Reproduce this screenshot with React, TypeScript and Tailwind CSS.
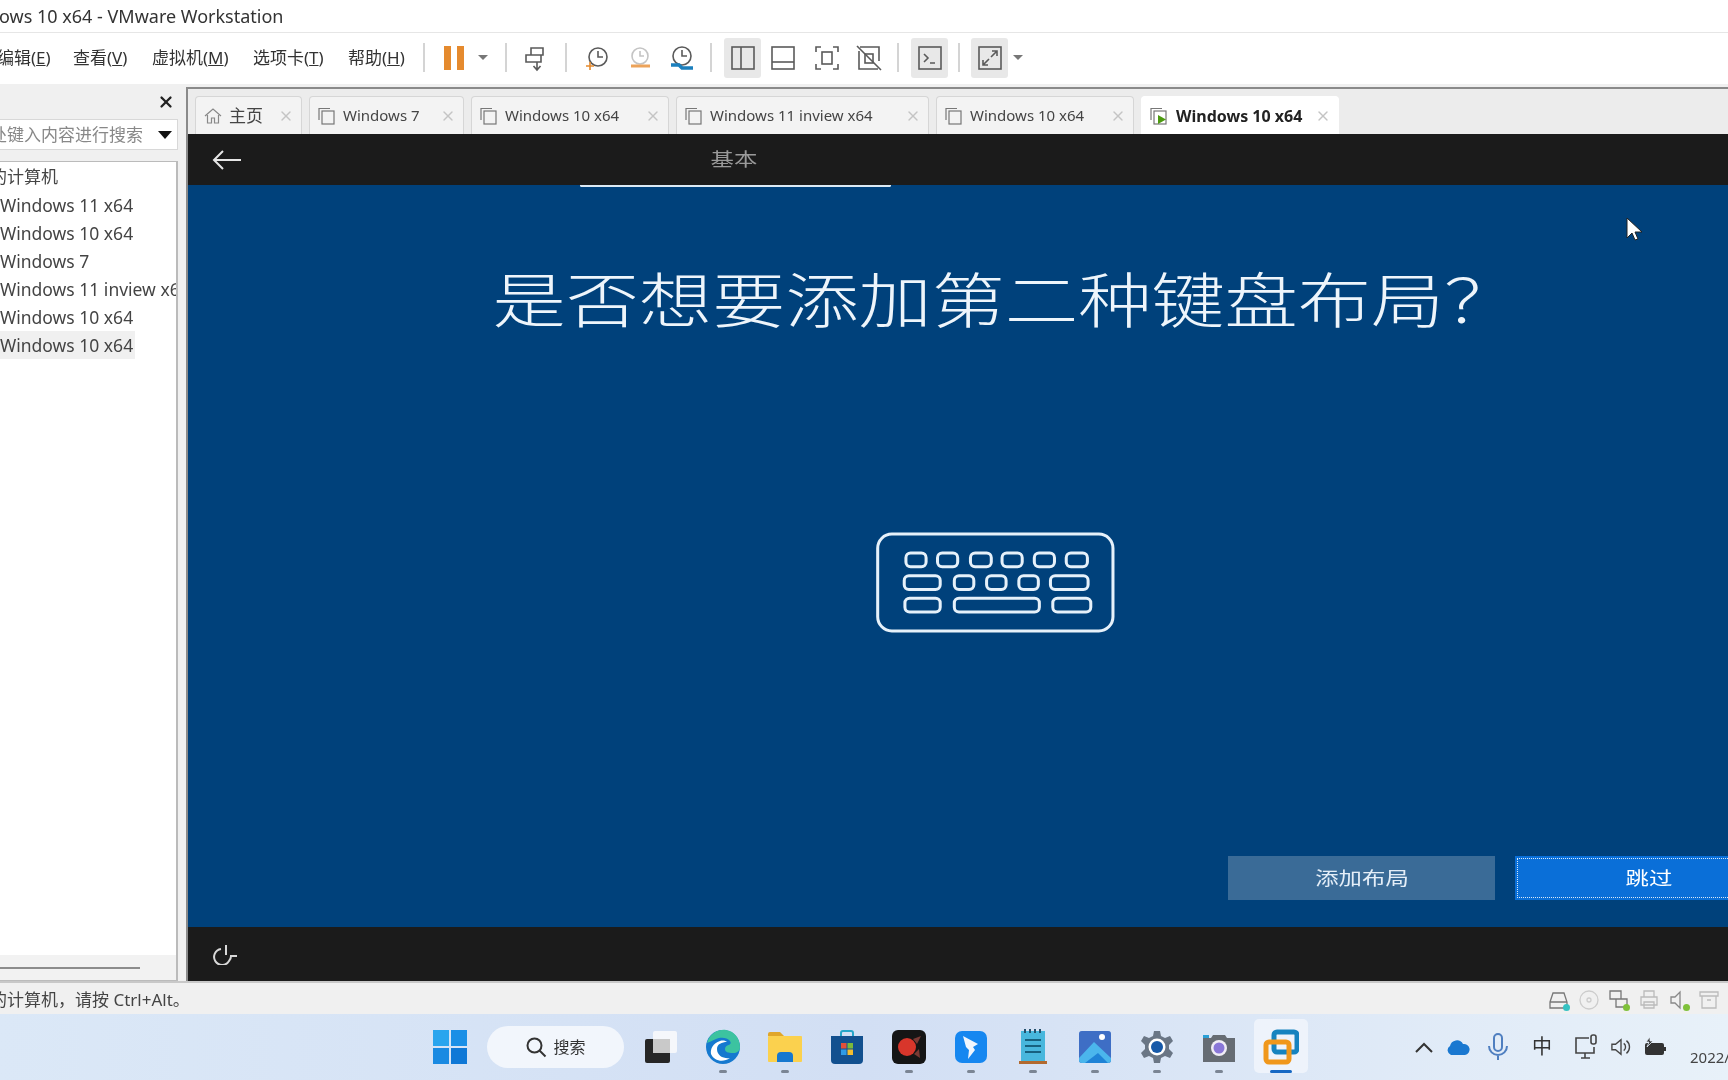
import { X } from "lucide-react";

const ui = "font-['Noto_Sans','Noto_Sans_CJK_SC',sans-serif]";

function Sep({ ml }: { ml: string }) {
  return <div className={`h-[29px] w-[2px] bg-[#d4d4d4] ${ml}`} />;
}

function Caret() {
  return <div className="h-0 w-0 border-x-[5px] border-t-[5px] border-x-transparent border-t-[#777]" />;
}

function Menu({ label, k, cls }: { label: string; k: string; cls: string }) {
  return (
    <span className={`shrink-0 whitespace-nowrap text-[17px] leading-none text-[#333] ${cls}`}>
      {label}(<span className="underline">{k}</span>)
    </span>
  );
}

function ToolIcon({ children, active, cls }: { children: React.ReactNode; active?: boolean; cls: string }) {
  return (
    <div className={`flex h-[40px] w-[37px] shrink-0 items-center justify-center rounded-[3px] ${active ? "bg-[#e8e8e8]" : ""} ${cls}`}>
      <svg width="28" height="28" viewBox="0 0 28 28" fill="none" stroke="#5a5a5a" strokeWidth="1.6">
        {children}
      </svg>
    </div>
  );
}

function TabIcon({ play }: { play?: boolean }) {
  return (
    <svg width="20" height="20" viewBox="0 0 20 20" fill="none" stroke="#777" strokeWidth="1.2" className="shrink-0">
      <path d="M2 14V2.5h11" />
      <rect x="5" y="5" width="12" height="13" fill={play ? "#fff" : "none"} />
      {play && <path d="M9 9l8 4.5-8 4.5z" fill="#4c9a10" stroke="none" />}
    </svg>
  );
}

function Tab({ label, w, gap, active, home }: { label: string; w: string; gap: string; active?: boolean; home?: boolean }) {
  return (
    <div
      className={`flex h-[38px] shrink-0 items-center rounded-t-[4px] border border-b-0 px-[7px] ${w} ${
        active ? "border-white bg-white text-[16px] font-bold text-[#222]" : "border-[#d6d6d6] bg-[#f3f3f3] text-[15px] text-[#444]"
      }`}
    >
      {home ? (
        <svg width="20" height="20" viewBox="0 0 20 20" fill="none" stroke="#888" strokeWidth="1.2" className="shrink-0">
          <path d="M2 10l8-7 8 7M4.5 9v8h4v-5h3v5h4V9" />
        </svg>
      ) : (
        <TabIcon play={active} />
      )}
      <span className={`whitespace-nowrap ${gap}`}>{label}</span>
      <X className="ml-auto shrink-0 text-[#c4c4c4]" size={16} strokeWidth={2} />
    </div>
  );
}

function Keyboard() {
  const keys = [
    [138, 97, 60], [232, 97, 60], [330, 97, 62], [424, 97, 60], [520, 97, 60], [615, 97, 63],
    [133, 165, 107], [282, 165, 58], [378, 165, 58], [474, 165, 58], [568, 165, 112],
    [135, 232, 105], [282, 232, 253], [575, 232, 113],
  ];
  return (
    <svg width="242" height="103" viewBox="46 32 720 306" fill="none" stroke="#e6f1fa" strokeWidth="9">
      <rect x="54" y="41" width="700" height="288" rx="42" />
      {keys.map(([x, y, w]) => (
        <rect key={`${x}-${y}`} x={x} y={y} width={w} height="41" rx="14" />
      ))}
    </svg>
  );
}

function StatusIcon({ children, dot }: { children: React.ReactNode; dot?: string }) {
  return (
    <div className="relative flex w-[30px] justify-center">
      <svg width="22" height="22" viewBox="0 0 22 22" fill="none" stroke="#9a9a9a" strokeWidth="1.3">
        {children}
      </svg>
      {dot && <span className={`absolute bottom-[0px] right-[4px] h-[7px] w-[7px] rounded-full ${dot}`} />}
    </div>
  );
}

function Cell({ children, dot, active }: { children: React.ReactNode; dot?: boolean; active?: boolean }) {
  return (
    <div className="relative flex h-[66px] w-[62px] shrink-0 items-center justify-center">
      {active && <div className="absolute left-[4px] top-[5px] h-[54px] w-[54px] rounded-[5px] bg-[#eef3fb]" />}
      <div className="relative">{children}</div>
      {dot && <span className="absolute left-[27px] top-[56px] h-[3px] w-[8px] rounded-full bg-[#7b8594]" />}
      {active && <span className="absolute left-[20px] top-[56px] h-[3px] w-[22px] rounded-full bg-[#1668c4]" />}
    </div>
  );
}

function Taskbar() {
  return (
    <div className={`flex h-[66px] shrink-0 items-center bg-gradient-to-r from-[#dbe8f7] via-[#d2dff4] to-[#e8f1f9] pl-[419px] ${ui}`}>
      <Cell>
        <svg width="34" height="34" viewBox="0 0 34 34">
          <rect width="16" height="16" fill="#2aa5ee" />
          <rect x="18" width="16" height="16" fill="#1a8fe6" />
          <rect y="18" width="16" height="16" fill="#1a8ae2" />
          <rect x="18" y="18" width="16" height="16" fill="#0f78d6" />
        </svg>
      </Cell>
      <div className="mx-[6px] flex h-[42px] w-[137px] shrink-0 items-center justify-center gap-[6px] rounded-full bg-[#f2f6fc] text-[16px] text-[#333]">
        <svg width="22" height="22" viewBox="0 0 22 22" fill="none" stroke="#333" strokeWidth="2">
          <circle cx="9.5" cy="9.5" r="7" />
          <path d="M14.5 14.5l6 6" />
        </svg>
        搜索
      </div>
      <Cell>
        <svg width="34" height="34" viewBox="0 0 34 34">
          <rect x="9" y="1" width="24" height="22" rx="2" fill="#f5f7fb" />
          <rect x="1" y="9" width="25" height="24" rx="2" fill="#262626" />
          <rect x="9" y="9" width="17" height="14" fill="#c9c9c9" />
        </svg>
      </Cell>
      <Cell dot>
        <svg width="36" height="36" viewBox="0 0 36 36">
          <circle cx="18" cy="18" r="17" fill="#1579cf" />
          <path d="M2 14C5 3 15 0 21 1c8 1 14 8 14 17 0 4-3 6-7 6-5 0-8-1-8-4 0-5 8-3 5-8-3-4-10-4-14-2C7 12 4 13 2 14z" fill="#3cc3a0" />
          <path d="M12 20c0 7 7 10 13 9-7 5-16 3-19-4-1-5 2-11 9-13 3-1 6 0 7 1-5 0-10 2-10 7z" fill="#fff" />
        </svg>
      </Cell>
      <Cell dot>
        <svg width="36" height="34" viewBox="0 0 36 34">
          <path d="M1 4a2 2 0 012-2h10l4 4h-16z" fill="#e0a62a" />
          <rect x="1" y="6" width="34" height="26" rx="1" fill="#fbd14e" />
          <path d="M10 32v-6a4 4 0 014-4h8a4 4 0 014 4v6z" fill="#1678cf" />
        </svg>
      </Cell>
      <Cell>
        <svg width="34" height="36" viewBox="0 0 34 36">
          <path d="M11 7V4a2 2 0 012-2h8a2 2 0 012 2v3" fill="none" stroke="#25a5c9" strokeWidth="2" />
          <path d="M1 7h32v24a4 4 0 01-4 4H5a4 4 0 01-4-4z" fill="#12508f" />
          <rect x="11" y="14" width="5.5" height="5.5" fill="#e2503a" />
          <rect x="17.5" y="14" width="5.5" height="5.5" fill="#7cba3b" />
          <rect x="11" y="20.5" width="5.5" height="5.5" fill="#2e9be6" />
          <rect x="17.5" y="20.5" width="5.5" height="5.5" fill="#f4bd2f" />
        </svg>
      </Cell>
      <Cell dot>
        <svg width="34" height="34" viewBox="0 0 34 34">
          <rect width="34" height="34" rx="6" fill="#151515" />
          <circle cx="15" cy="17" r="9" fill="#d8362b" />
          <path d="M21 9l8-3-4 8zM22 24l6 4-1-9z" fill="#7a3a34" />
        </svg>
      </Cell>
      <Cell dot>
        <svg width="32" height="32" viewBox="0 0 32 32">
          <rect width="32" height="32" rx="7" fill="#1687f0" />
          <path d="M8 5l15 8-5 3 2 3-7 9 1-9-3-3z" fill="#f1f6fd" />
        </svg>
      </Cell>
      <Cell dot>
        <svg width="28" height="36" viewBox="0 0 28 36">
          <rect x="2" y="2" width="24" height="30" fill="#48b7dd" />
          <path d="M6 0v4M11 0v4M16 0v4M21 0v4" stroke="#25516d" strokeWidth="2" />
          <path d="M6 11h16M6 17h16M6 23h16" stroke="#17617f" strokeWidth="2" />
          <rect y="32" width="28" height="3" fill="#b26a30" />
        </svg>
      </Cell>
      <Cell dot>
        <svg width="32" height="32" viewBox="0 0 32 32">
          <rect width="32" height="32" rx="3" fill="#2d73c8" />
          <rect width="32" height="32" rx="3" fill="#5e63c0" fillOpacity="0.35" />
          <circle cx="23" cy="6" r="3" fill="#fff" />
          <path d="M0 27L15 11l17 16v2a3 3 0 01-3 3H3a3 3 0 01-3-3z" fill="#4bb6ec" />
          <path d="M6 32l13-10 10 10z" fill="#1f83d6" />
        </svg>
      </Cell>
      <Cell dot>
        <svg width="34" height="34" viewBox="0 0 34 34">
          <path d="M14 1h6l1 5 4 2 5-2 3 5-4 4v4l4 4-3 5-5-2-4 2-1 5h-6l-1-5-4-2-5 2-3-5 4-4v-4L1 11l3-5 5 2 4-2z" fill="#6a7685" />
          <circle cx="17" cy="17" r="8.5" fill="#fff" />
          <circle cx="17" cy="17" r="6" fill="#1759a8" />
        </svg>
      </Cell>
      <Cell dot>
        <svg width="34" height="30" viewBox="0 0 34 30">
          <path d="M1 6h8l2-3h12l2 3h8v24H1z" fill="#666c73" />
          <rect x="1" y="3" width="6" height="3" fill="#2a9fd6" />
          <circle cx="17" cy="16" r="8" fill="#f0edf5" />
          <circle cx="17" cy="16" r="5.5" fill="#8a77d8" />
        </svg>
      </Cell>
      <Cell active>
        <svg width="36" height="36" viewBox="0 0 36 36" fill="none" strokeWidth="5">
          <rect x="11" y="3" width="23" height="20" rx="3" stroke="#1683bf" />
          <rect x="3" y="13" width="23" height="20" rx="3" stroke="#f0971b" />
        </svg>
      </Cell>
      <div className="ml-[95px] flex shrink-0 items-center text-[#333]">
        <div className="flex w-[34px] justify-center">
          <svg width="20" height="12" viewBox="0 0 20 12" fill="none" stroke="#333" strokeWidth="2">
            <path d="M2 11l8-8 8 8" />
          </svg>
        </div>
        <div className="flex w-[34px] justify-center">
          <svg width="24" height="16" viewBox="0 0 24 16">
            <path d="M5 16a5 5 0 01-1-9 7 7 0 0113-2 5.5 5.5 0 012 11z" fill="#1a78d0" />
          </svg>
        </div>
        <div className="flex w-[46px] justify-center">
          <svg width="20" height="28" viewBox="0 0 20 28" fill="none" stroke="#4f7fc0" strokeWidth="2">
            <rect x="6" y="1" width="8" height="17" rx="4" />
            <path d="M1 13a9 9 0 0018 0M10 22v5" />
          </svg>
        </div>
        <div className="w-[42px] text-center text-[20px] leading-none">中</div>
        <div className="flex w-[48px] justify-center">
          <svg width="24" height="26" viewBox="0 0 24 26" fill="none" stroke="#444" strokeWidth="1.6">
            <path d="M14 4H1v15h18v-6M6 24h9M10 19v5" />
            <rect x="16" y="1" width="5" height="9" rx="2" />
          </svg>
        </div>
        <div className="flex w-[20px] justify-center">
          <svg width="22" height="20" viewBox="0 0 22 20" fill="none" stroke="#444" strokeWidth="1.5">
            <path d="M1 7v6h4l6 5V2L5 7zM14 6a5 5 0 010 8M17 3a9 9 0 010 14" />
          </svg>
        </div>
        <div className="flex w-[48px] justify-center">
          <svg width="24" height="20" viewBox="0 0 24 20">
            <path d="M2 8a2 2 0 012-2h15a2 2 0 012 2v8a2 2 0 01-2 2H4a2 2 0 01-2-2z" fill="#333" />
            <rect x="21" y="10" width="2" height="4" fill="#333" />
            <path d="M7 0L3 5h3l-2 5 6-6H7z" fill="#333" stroke="#e6eff9" strokeWidth="0.8" />
          </svg>
        </div>
        <div className="ml-[11px] flex w-[60px] flex-col whitespace-nowrap text-[15px] leading-[20px] text-[#444]">
          <span className="ml-[37px]">1</span>
          <span>2022/</span>
        </div>
      </div>
    </div>
  );
}

export default function App() {
  return (
    <div className={`flex h-[1080px] w-[1728px] flex-col overflow-hidden bg-[#f0f0f0] blur-[0.5px] ${ui}`}>
      <div className="flex h-[33px] shrink-0 items-center whitespace-nowrap border-b border-[#e6e6e6] bg-white text-[18px] text-[#333]">
        <span className="-ml-[1px]">ows 10 x64 - VMware Workstation</span>
      </div>

      <div className="flex h-[51px] shrink-0 items-center bg-white pb-[2px]">
        <Menu label="编辑" k="E" cls="-ml-[3px] w-[53px]" />
        <Menu label="查看" k="V" cls="ml-[23px] w-[57px]" />
        <Menu label="虚拟机" k="M" cls="ml-[22px] w-[78px]" />
        <Menu label="选项卡" k="T" cls="ml-[23px] w-[72px]" />
        <Menu label="帮助" k="H" cls="ml-[23px] w-[57px]" />
        <Sep ml="ml-[18px]" />
        <div className="ml-[19px] flex h-[24px] w-[20px] justify-between">
          <div className="w-[7px] bg-[#e58a2e]" />
          <div className="w-[7px] bg-[#e58a2e]" />
        </div>
        <div className="ml-[14px]"><Caret /></div>
        <Sep ml="ml-[17px]" />
        <ToolIcon cls="ml-[11px]">
          <path d="M8 4h12v7H8zM3 11h15v7H3zM14 18v7M10.5 22l3.5 4 3.5-4" />
        </ToolIcon>
        <Sep ml="ml-[10px]" />
        <ToolIcon cls="ml-[11px]">
          <circle cx="15" cy="13" r="9" />
          <path d="M15 7v6h5" />
          <path d="M3 22h8M7 18v8" stroke="#e58a2e" />
        </ToolIcon>
        <ToolIcon cls="ml-[6px]">
          <g stroke="#c4c4c4">
            <circle cx="14" cy="12" r="8" />
            <path d="M14 7v5h4" />
          </g>
          <path d="M5 22h19" stroke="#eca35a" strokeWidth="3" />
        </ToolIcon>
        <ToolIcon cls="ml-[5px]">
          <circle cx="14" cy="12" r="9" />
          <path d="M14 6v6h5" />
          <path d="M3 21h8l3 3h11" stroke="#1b7fbd" strokeWidth="3.5" />
        </ToolIcon>
        <Sep ml="ml-[10px]" />
        <ToolIcon active cls="ml-[12px]">
          <rect x="3" y="3" width="22" height="22" />
          <path d="M12 3v22" />
        </ToolIcon>
        <ToolIcon cls="ml-[3px]">
          <rect x="3" y="3" width="22" height="22" />
          <path d="M3 18h22" />
        </ToolIcon>
        <ToolIcon cls="ml-[7px]">
          <path d="M8 3H3v5M20 3h5v5M8 25H3v-5M20 25h5v-5" />
          <rect x="9" y="8" width="10" height="12" />
        </ToolIcon>
        <ToolIcon cls="ml-[5px]">
          <path d="M5 3h19v14M23 25H4V7M2 2l24 24" />
          <rect x="10" y="10" width="8" height="9" />
        </ToolIcon>
        <Sep ml="ml-[10px]" />
        <ToolIcon active cls="ml-[12px]">
          <rect x="3" y="3" width="22" height="22" />
          <path d="M8 10l4 4-4 4M14 19h5" />
        </ToolIcon>
        <Sep ml="ml-[10px]" />
        <ToolIcon active cls="ml-[11px]">
          <rect x="3" y="3" width="22" height="22" />
          <path d="M15 13l6-6M16 7h5v5M13 15l-6 6M12 21H7v-5" />
        </ToolIcon>
        <div className="ml-[5px]"><Caret /></div>
      </div>

      <div className="flex min-h-0 flex-1">
        <aside className="flex w-[186px] shrink-0 flex-col pr-[8px]">
          <div className="flex h-[35px] shrink-0 items-center justify-end pr-[3px]">
            <X size={18} strokeWidth={3} className="text-[#222]" />
          </div>
          <div className="flex h-[31px] shrink-0 items-center justify-between whitespace-nowrap border border-l-0 border-[#d8d8d8] bg-white pr-[5px] text-[17px] text-[#888]">
            <span className="-ml-[10px]">处键入内容进行搜索</span>
            <div className="h-0 w-0 border-x-[7px] border-t-[8px] border-x-transparent border-t-[#111]" />
          </div>
          <div className="mt-[11px] flex min-h-0 flex-1 flex-col border-y border-r-2 border-y-[#bbb] border-r-[#bbb] bg-white text-[17.5px] text-[#444]">
            <div className="flex-1 overflow-hidden whitespace-nowrap pt-[1px] leading-[28px]">
              <div className="-ml-[10px] text-[17px]">的计算机</div>
              <div>Windows 11 x64</div>
              <div>Windows 10 x64</div>
              <div>Windows 7</div>
              <div>Windows 11 inview x64</div>
              <div>Windows 10 x64</div>
              <div className="w-[135px] bg-[#f0f0f0]">Windows 10 x64</div>
            </div>
            <div className="flex h-[25px] shrink-0 items-center bg-[#f2f2f2]">
              <div className="h-[2px] w-[140px] bg-[#8c8c8c]" />
            </div>
          </div>
        </aside>

        <main className="mt-[3px] flex min-w-0 flex-1 flex-col border-l-2 border-t-2 border-[#8a8a8a]">
          <div className="flex h-[45px] shrink-0 items-end gap-[7px] overflow-hidden bg-[#ececec] pl-[7px]">
            <Tab home label="主页" w="w-[107px]" gap="ml-[6px] font-normal text-[17px]" />
            <Tab label="Windows 7" w="w-[155px]" gap="ml-[6px]" />
            <Tab label="Windows 10 x64" w="w-[198px]" gap="ml-[6px]" />
            <Tab label="Windows 11 inview x64" w="w-[253px]" gap="ml-[6px]" />
            <Tab label="Windows 10 x64" w="w-[198px]" gap="ml-[6px]" />
            <Tab active label="Windows 10 x64" w="w-[198px]" gap="ml-[7px]" />
          </div>

          <div className="flex h-[51px] shrink-0 items-center bg-[#1b1b1b]">
            <svg width="30" height="22" viewBox="0 0 30 22" fill="none" stroke="#e6e6e6" strokeWidth="2" className="ml-[24px]">
              <path d="M29 11H2M11 2l-9 9 9 9" />
            </svg>
            <span className="ml-[474px] inline-block scale-x-[1.3] text-[18px] text-[#9a9a9a]">基本</span>
          </div>

          <div className="relative flex min-h-0 flex-1 flex-col overflow-hidden bg-[#00417b]">
            <div className="absolute left-[392px] top-[-1px] h-[3px] w-[311px] rounded-full bg-[#dbe9f5]" />
            <svg width="20" height="26" viewBox="0 0 20 26" className="absolute left-[1436px] top-[32px]">
              <path d="M3 1v20l5-5 3 7 3-1-3-7h7z" fill="#fff" stroke="#222" strokeWidth="1" />
            </svg>

            <div className="mt-[75px] flex justify-center pl-[94px]">
              <h1 className="scale-x-[1.22] whitespace-nowrap text-[60px] font-light leading-[80px] text-[#eef5fb]">
                是否想要添加第二种键盘布局？
              </h1>
            </div>

            <div className="mt-[191px] flex justify-center pl-[75px]">
              <Keyboard />
            </div>

            <div className="mt-auto mb-[27px] flex justify-end gap-[20px] -mr-[54px] text-[18px] text-[#e4eef8]">
              <button className="h-[44px] w-[267px] bg-[#3a6b97]">
                <span className="inline-block scale-x-[1.3]">添加布局</span>
              </button>
              <button className="flex h-[44px] w-[267px] items-center justify-center border-[3px] border-[#0a6fd8] bg-[#0a6fd8] text-white outline-dotted outline-1 -outline-offset-3 outline-[#dbe9f5]">
                <span className="inline-block scale-x-[1.3]">跳过</span>
              </button>
            </div>
          </div>

          <div className="flex h-[54px] shrink-0 items-center bg-[#1b1b1b] pl-[24px]">
            <svg width="28" height="22" viewBox="0 0 28 22" fill="none" stroke="#d8d8d8" strokeWidth="2">
              <path d="M9 6a8 8 0 108 12c1-1 2-3 2-5h6M14 2v10" />
            </svg>
          </div>
        </main>
      </div>

      <div className="flex h-[33px] shrink-0 items-center justify-between whitespace-nowrap border-t-2 border-[#c8c8c8] bg-[#f0f0f0] pt-[3px] text-[17px] text-[#444]">
        <span className="-ml-[10px]">的计算机，请按 Ctrl+Alt。</span>
        <div className="mr-[4px] flex">
          <StatusIcon dot="bg-[#35c2c2]">
            <path d="M2 13l3-9h11l3 9v6H2zM2 13h17" stroke="#777" />
          </StatusIcon>
          <StatusIcon>
            <circle cx="11" cy="11" r="9" stroke="#ccc" />
            <circle cx="11" cy="11" r="2" stroke="#ccc" />
          </StatusIcon>
          <StatusIcon dot="bg-[#7fc13a]">
            <path d="M2 2h11v8H2zM8 10h11v8H8z" stroke="#777" />
          </StatusIcon>
          <StatusIcon>
            <path d="M6 8V2h10v6M3 8h16v8H3zM6 13h10v6H6z" stroke="#bbb" />
          </StatusIcon>
          <StatusIcon dot="bg-[#7fc13a]">
            <path d="M3 8v6h4l5 5V3L7 8z" stroke="#888" />
          </StatusIcon>
          <StatusIcon>
            <path d="M2 3h18v4H2zM4 7v12h14V7M9 11h4" stroke="#bbb" />
          </StatusIcon>
        </div>
      </div>

      <Taskbar />
    </div>
  );
}
